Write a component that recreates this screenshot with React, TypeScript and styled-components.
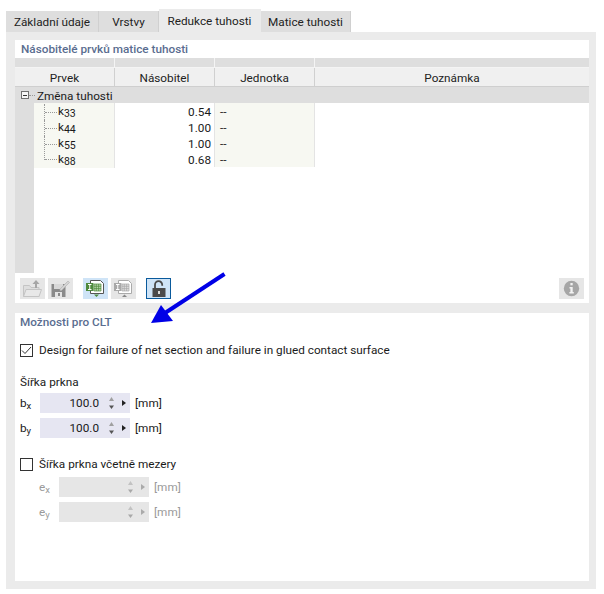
import React from "react";
import styled, { createGlobalStyle } from "styled-components";

const Global = createGlobalStyle`
  html, body { margin: 0; padding: 0; background: #fff; }
  body { font-family: Roboto, "Noto Sans", sans-serif; font-size: 11.75px; color: #1a1a1a; }
  * { box-sizing: border-box; }
`;
const Page = styled.div`
  position: relative; width: 604px; height: 594px; padding: 9px 8px 5px 6px;
  display: flex; flex-direction: column;
`;
const Tabs = styled.div`display: flex; align-items: flex-end; height: 23px; gap: 0;`;
const Tab = styled.div<{ $w: number; $active?: boolean }>`
  width: ${p => p.$w}px; height: ${p => (p.$active ? 23 : 21)}px; padding-top: 1px;
  background: ${p => (p.$active ? "#ebebeb" : "#dedede")};
  border-right: 1px solid ${p => (p.$active ? "#ebebeb" : "#d0d0d0")};
  display: flex; align-items: center; justify-content: center; color: #222;
`;
const Outer = styled.div`
  flex: 1; background: #ebebeb; padding: 8px 7px 8px 9px; display: flex; flex-direction: column; gap: 10px;
`;
const Card = styled.section<{ $h: number }>`background: #fff; height: ${p => p.$h}px; display: flex; flex-direction: column;`;
const CardTitle = styled.div`
  height: 18px; padding: 0 6px; font-weight: 500; color: #5a6d90; line-height: 18px;
`;
const BandRow = styled.div`display: grid; grid-template-columns: 100px 100px 100px 1fr; height: 10px; background: #dedede;`;
const BandCell = styled.div`border-right: 1px solid #f4f4f4; border-bottom: 1px solid #f4f4f4; &:last-child { border-right: 0; }`;
const HeadRow = styled.div`
  display: grid; grid-template-columns: 100px 100px 100px 1fr; height: 19px; background: #f0f0f0; border-bottom: 1px solid #cfcfcf;
`;
const HeadCell = styled.div`
  display: flex; align-items: center; justify-content: center; padding-top: 1px; border-right: 1px solid #d0d0d0; color: #222;
  &:last-child { border-right: 0; }
`;
const GroupRow = styled.div`height: 16px; background: #dedede; display: flex; align-items: center; padding-left: 6px; color: #1a1a1a;`;
const GroupLabel = styled.span`padding-top: 2px;`;
const Expander = styled.span`
  width: 8px; height: 8px; border: 1px solid #707070; background: #f6f6f6; display: flex; align-items: center; justify-content: center;
  &::before { content: ""; width: 4px; height: 1px; background: #333; }
`;
const GroupDots = styled.span`width: 6px; border-top: 1px dotted #999; margin: 0 2px 0 0;`;
const TableBody = styled.div`display: flex; height: 170px;`;
const Gutter = styled.div`width: 19px; background: #dedede;`;
const Rows = styled.div`flex: 1; display: flex; flex-direction: column;`;
const DataRow = styled.div`display: grid; grid-template-columns: 81px 100px 100px 1fr; height: 16px;`;
const NameCell = styled.div`
  background: #f7f8f2; border-right: 1px solid #e4e4e4; display: flex; align-items: center; padding-left: 10px;
`;
const NameLabel = styled.span`line-height: 16px;`;
const Connector = styled.span<{ $last?: boolean }>`
  width: 12px; height: 16px; border-left: 1px dotted #999; position: relative; margin-right: 2px;
  ${p => (p.$last ? "height: 9px; align-self: flex-start;" : "")}
  &::after { content: ""; position: absolute; left: 0; top: 8px; width: 12px; border-top: 1px dotted #999; }
`;
const Sub = styled.span`font-size: 10.5px; position: relative; top: 1.5px; letter-spacing: -.1px;`;
const ValueCell = styled.div`border-right: 1px solid #e4e4e4; text-align: right; padding-right: 3px; line-height: 18px; height: 16px;`;
const UnitCell = styled.div`background: #f7f8f2; border-right: 1px solid #e4e4e4; padding-left: 5px; line-height: 18px; height: 16px;`;
const Toolbar = styled.div`display: flex; align-items: flex-start; padding: 5px 5px 0 5px; height: 30px;`;
const ToolBtn = styled.div<{ $tone?: "grey" | "blue" | "lock"; $ml?: number }>`
  width: 25px; height: 21px; margin-left: ${p => p.$ml ?? 0}px;
  background: ${p => (p.$tone === "blue" || p.$tone === "lock" ? "#cfe4f7" : "#e6e6e6")};
  ${p => (p.$tone === "lock" ? "border: 1px solid #0a5a9c;" : "")}
  display: flex; align-items: center; justify-content: center;
`;
const Spacer = styled.div`flex: 1;`;
const Options = styled.div`flex: 1; padding: 0 5px; display: flex; flex-direction: column;`;
const OptTitle = styled.div`height: 18px; font-weight: 500; color: #5a6d90; line-height: 18px;`;
const CheckLine = styled.label<{ $mt: number }>`display: flex; align-items: center; gap: 6px; margin-top: ${p => p.$mt}px; height: 16px;`;
const Box = styled.span`
  width: 13px; height: 13px; border: 1px solid #333; background: #fff; display: flex; align-items: center; justify-content: center;
`;
const Section = styled.div`margin-top: 16px; height: 16px; line-height: 16px;`;
const Field = styled.div<{ $mt: number; $indent?: number; $off?: boolean }>`
  display: flex; align-items: center; height: 20px; margin-top: ${p => p.$mt}px; margin-left: ${p => p.$indent ?? 0}px;
  color: ${p => (p.$off ? "#9a9a9a" : "#1a1a1a")};
`;
const SymLabel = styled.span`width: 20px;`;
const SymSub = styled.span`font-size: 9.5px; position: relative; top: 2px;`;
const Input = styled.div<{ $off?: boolean }>`
  width: 90px; height: 20px; background: ${p => (p.$off ? "#e6e6e6" : "#e6e6f2")}; display: flex; align-items: center; padding-left: 4px; margin-right: 5px;
`;
const InputVal = styled.span`width: 55px; text-align: right;`;
const Unit = styled.span``;
const Arrow = styled.svg`position: absolute; left: 0; top: 0; pointer-events: none;`;

const Spin = ({ off }: { off?: boolean }) => (
  <svg width="28" height="20" viewBox="0 0 28 20" style={{ flexShrink: 0 }}>
    <path d="M12.500 4 15 8h-5z" fill={off ? "#c2c2c2" : "#a0a0a0"} />
    <path d="M12.500 16 10 12.500h5z" fill={off ? "#a8a8a8" : "#555"} />
    <path d="M23 7l4 3-4 3z" fill={off ? "#aaa" : "#222"} />
  </svg>
);
const FolderIcon = () => (
  <svg width="21" height="19" viewBox="0 0 21 19">
    <path d="M1.500 6.500h6l1.500 2h8v9h-15.500z" fill="#dedede" stroke="#c4c4c4" />
    <path d="M1.500 17.500 4 10.500h15.500l-2.500 7z" fill="#e8e8e8" stroke="#c4c4c4" />
    <path d="M13 9V5h-2.500L14 1l3.500 4H15v4z" fill="#a6a6a6" />
  </svg>
);
const SaveIcon = () => (
  <svg width="21" height="19" viewBox="0 0 21 19">
    <path d="M1.500 5h14v13h-14z" fill="#8a8a8a" />
    <path d="M4 5h9v5H4z" fill="#d8d8d8" />
    <path d="M5 13h7v5H5z" fill="#e4e4e4" />
    <path d="M8 14h2v3H8z" fill="#8a8a8a" />
    <path d="m10 10 8-8 1.500 1.500-8 8H10z" fill="#d4d4d4" stroke="#b0b0b0" strokeWidth=".6" />
  </svg>
);
const Sheet = ({ green }: { green?: boolean }) => {
  const c = green ? "#4f8a3e" : "#a8a8a8";
  return (
    <svg width="21" height="19" viewBox="0 0 21 19">
      <path d="M5.500 1.500h10l3 3v10h-13z" fill="#fff" stroke={green ? "#555" : "#aaa"} />
      <path d="M9 5h7v7H9z" fill={green ? "#b6d6a8" : "#ddd"} stroke={c} strokeWidth=".7" />
      <path d="M11.300 5v7M13.600 5v7M9 7.300h7M9 9.600h7" stroke={c} strokeWidth=".7" />
      <path d="M1 4h7.500v8H1z" fill={c} />
      <path d="M3 5.500h3.500M3 10.500h3.500M4.750 5.500v5" stroke="#fff" strokeWidth="1" fill="none" />
      <path d={green ? "M9 15.500h5L11.500 18z" : "M9 18h5l-2.500-2.500z"} fill={green ? "#4f8a3e" : "#888"} />
    </svg>
  );
};
const LockIcon = () => (
  <svg width="18" height="18" viewBox="0 0 18 18">
    <path d="M5 8V4.800a3.600 3.600 0 0 1 7.200 0v1" fill="none" stroke="#4a4a4a" strokeWidth="1.800" />
    <rect x="2.500" y="8" width="13" height="9" fill="#4a4a4a" />
    <path d="M9 11v3" stroke="#fff" strokeWidth="1.600" />
  </svg>
);
const InfoIcon = () => (
  <svg width="17" height="17" viewBox="0 0 17 17">
    <circle cx="8.500" cy="8.500" r="7.700" fill="#a6a6a6" />
    <rect x="7.400" y="3" width="2.300" height="2.300" fill="#f2f2f2" />
    <path d="M6.500 7h3.200v5h1.100v1.400H6.400V12h1V8.400h-.9z" fill="#f2f2f2" />
  </svg>
);

const data = [
  { s: "33", v: "0.54" },
  { s: "44", v: "1.00" },
  { s: "55", v: "1.00" },
  { s: "88", v: "0.68" },
];

export default function App() {
  return (
    <Page>
      <Global />
      <Tabs>
        <Tab $w={93}>Základní údaje</Tab>
        <Tab $w={60}>Vrstvy</Tab>
        <Tab $w={102} $active>Redukce tuhosti</Tab>
        <Tab $w={90}>Matice tuhosti</Tab>
      </Tabs>
      <Outer>
        <Card $h={263}>
          <CardTitle>Násobitelé prvků matice tuhosti</CardTitle>
          <BandRow><BandCell /><BandCell /><BandCell /><BandCell /></BandRow>
          <HeadRow>
            <HeadCell>Prvek</HeadCell>
            <HeadCell>Násobitel</HeadCell>
            <HeadCell>Jednotka</HeadCell>
            <HeadCell>Poznámka</HeadCell>
          </HeadRow>
          <GroupRow><Expander /><GroupDots /><GroupLabel>Změna tuhosti</GroupLabel></GroupRow>
          <TableBody>
            <Gutter />
            <Rows>
              {data.map((d, i) => (
                <DataRow key={d.s}>
                  <NameCell>
                    <Connector $last={i === data.length - 1} />
                    <NameLabel>k<Sub>{d.s}</Sub></NameLabel>
                  </NameCell>
                  <ValueCell>{d.v}</ValueCell>
                  <UnitCell>--</UnitCell>
                  <div />
                </DataRow>
              ))}
            </Rows>
          </TableBody>
          <Toolbar>
            <ToolBtn><FolderIcon /></ToolBtn>
            <ToolBtn $ml={3}><SaveIcon /></ToolBtn>
            <ToolBtn $tone="blue" $ml={10}><Sheet green /></ToolBtn>
            <ToolBtn $ml={3}><Sheet /></ToolBtn>
            <ToolBtn $tone="lock" $ml={10}><LockIcon /></ToolBtn>
            <Spacer />
            <ToolBtn><InfoIcon /></ToolBtn>
          </Toolbar>
        </Card>
        <Card $h={268}>
          <Options>
            <OptTitle>Možnosti pro CLT</OptTitle>
            <CheckLine $mt={11}>
              <Box>
                <svg width="11" height="9" viewBox="0 0 11 9"><path d="m1 4.500 3 3 6-6.500" fill="none" stroke="#333" strokeWidth="1" /></svg>
              </Box>
              Design for failure of net section and failure in glued contact surface
            </CheckLine>
            <Section>Šířka prkna</Section>
            <Field $mt={3}>
              <SymLabel>b<SymSub>x</SymSub></SymLabel>
              <Input><InputVal>100.0</InputVal><Spin /></Input><Unit>[mm]</Unit>
            </Field>
            <Field $mt={5}>
              <SymLabel>b<SymSub>y</SymSub></SymLabel>
              <Input><InputVal>100.0</InputVal><Spin /></Input><Unit>[mm]</Unit>
            </Field>
            <CheckLine $mt={18}><Box />Šířka prkna včetně mezery</CheckLine>
            <Field $mt={5} $indent={19} $off>
              <SymLabel>e<SymSub>x</SymSub></SymLabel>
              <Input $off><InputVal /><Spin off /></Input><Unit>[mm]</Unit>
            </Field>
            <Field $mt={5} $indent={19} $off>
              <SymLabel>e<SymSub>y</SymSub></SymLabel>
              <Input $off><InputVal /><Spin off /></Input><Unit>[mm]</Unit>
            </Field>
          </Options>
        </Card>
      </Outer>
      <Arrow width="604" height="594" viewBox="0 0 604 594">
        <path d="M224.500 274 165 313" stroke="#0000e6" strokeWidth="4" fill="none" />
        <path d="M151 323 161 305 173 321z" fill="#0000e6" />
      </Arrow>
    </Page>
  );
}
